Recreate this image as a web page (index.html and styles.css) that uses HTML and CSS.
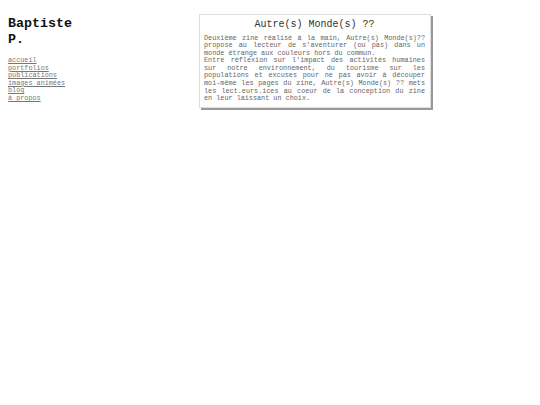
FILE: index.html
```html
<!DOCTYPE html>
<html lang="fr">
<head>
<meta charset="utf-8">
<title>Baptiste P.</title>
<link rel="stylesheet" href="styles.css">
</head>
<body>
<div class="page">
  <aside class="side">
    <h1 class="name">Baptiste<br>P.</h1>
    <nav class="nav">
      <a href="#">accueil</a>
      <a href="#">portfolios</a>
      <a href="#">publications</a>
      <a href="#">images animées</a>
      <a href="#">blog</a>
      <a href="#">à propos</a>
    </nav>
  </aside>
  <main class="main">
    <article class="card">
      <h2 class="card-title">Autre(s) Monde(s) ??</h2>
      <p class="card-text">Deuxième zine réalisé à la main, Autre(s) Monde(s)?? propose au lecteur de s'aventurer (ou pas) dans un monde étrange aux couleurs hors du commun.<br>Entre réflexion sur l'impact des activités humaines sur notre environnement, du tourisme sur les populations et excuses pour ne pas avoir à découper moi-même les pages du zine, Autre(s) Monde(s) ?? mets les lect.eurs.ices au coeur de la conception du zine en leur laissant un choix.</p>
    </article>
  </main>
</div>
</body>
</html>
```
FILE: styles.css
```css
html, body {
  margin: 0;
  padding: 0;
  background: #fff;
}
body {
  padding: 8px;
  font-family: "Liberation Mono", "DejaVu Sans Mono", monospace;
  color: #333;
}
.page {
  display: flex;
  align-items: flex-start;
}
.side {
  width: 191px;
  flex: none;
}
.name {
  margin: 8px 0 0;
  font-size: 13.33px;
  line-height: 16px;
  font-weight: bold;
  color: #111;
}
.nav {
  display: flex;
  flex-direction: column;
  margin-top: 9px;
}
.nav a {
  font-size: 6.8px;
  line-height: 7.6px;
  color: #777;
  text-decoration: underline;
}
.main {
  padding-top: 6px;
}
.card {
  width: 221px;
  padding: 4px 5px 4px 4px;
  border: 1px solid #ddd;
  box-shadow: 2px 2px 0 #999;
}
.card-title {
  margin: 0;
  font-size: 10px;
  line-height: 11.5px;
  font-weight: normal;
  text-align: center;
  color: #333;
}
.card-text {
  margin: 4px 0 0;
  font-size: 6.8px;
  line-height: 7.6px;
  text-align: justify;
  color: #666;
}
```
